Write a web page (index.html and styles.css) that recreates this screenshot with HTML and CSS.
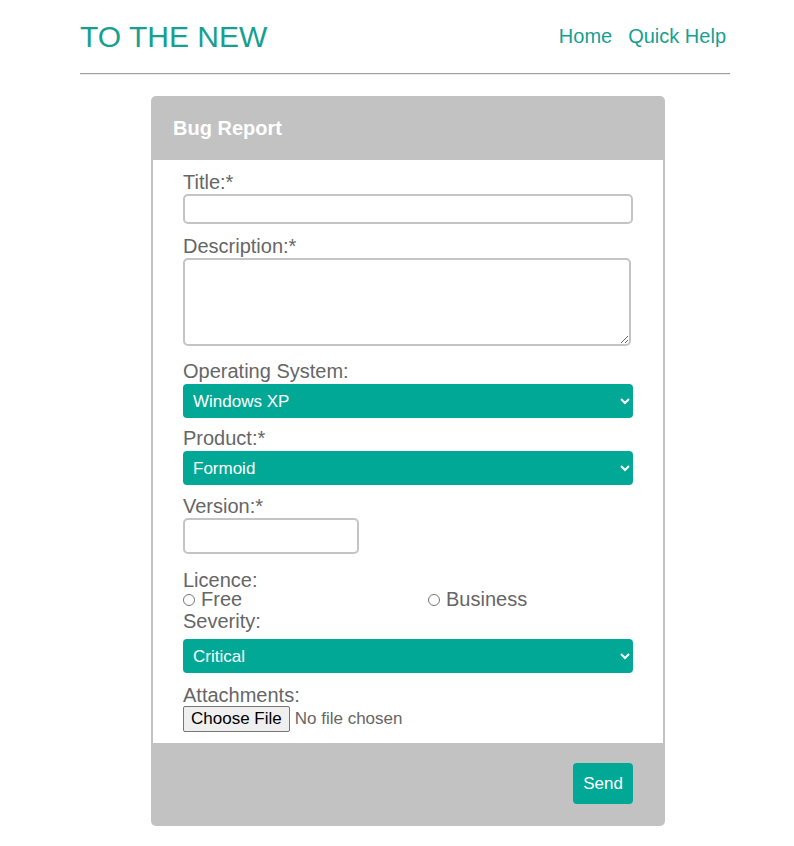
FILE: index.html
```html
<!DOCTYPE html>
<html>
<head>
<meta charset="utf-8">
<link rel="stylesheet" href="styles.css">
</head>
<body>
<div class="page">
  <header class="top">
    <div class="brand">TO THE NEW</div>
    <nav class="nav">
      <a href="#">Home</a>
      <a href="#">Quick Help</a>
    </nav>
  </header>
  <hr class="rule">
  <form class="card">
    <div class="card-head">Bug Report</div>
    <div class="card-body">
      <div class="field f-title">
        <label class="lbl">Title:*</label>
        <input class="txt" type="text">
      </div>
      <div class="field f-desc">
        <label class="lbl">Description:*</label>
        <textarea class="area"></textarea>
      </div>
      <div class="field f-os">
        <label class="lbl">Operating System:</label>
        <select class="sel"><option>Windows XP</option></select>
      </div>
      <div class="field f-prod">
        <label class="lbl">Product:*</label>
        <select class="sel"><option>Formoid</option></select>
      </div>
      <div class="field f-ver">
        <label class="lbl">Version:*</label>
        <input class="txt short" type="text">
      </div>
      <div class="field f-lic">
        <label class="lbl tight">Licence:</label>
        <div class="radios">
          <label class="opt"><input type="radio" name="lic" class="rad">Free</label>
          <label class="opt"><input type="radio" name="lic" class="rad">Business</label>
        </div>
      </div>
      <div class="field f-sev">
        <label class="lbl">Severity:</label>
        <select class="sel sev"><option>Critical</option></select>
      </div>
      <div class="field f-att">
        <label class="lbl">Attachments:</label>
        <input class="file" type="file">
      </div>
    </div>
    <div class="card-foot">
      <button type="button" class="send">Send</button>
    </div>
  </form>
</div>
</body>
</html>
```
FILE: styles.css
```css
html, body {
  margin: 0;
  padding: 0;
  background: #fff;
}
body {
  font-family: "Liberation Sans", Arial, sans-serif;
}
.page {
  width: 650px;
  margin-left: 80px;
  padding-top: 19px;
}
.top {
  display: flex;
  justify-content: space-between;
  align-items: flex-start;
  height: 54px;
}
.brand {
  font-size: 30px;
  line-height: 35px;
  color: #17a090;
}
.nav {
  display: flex;
  gap: 16px;
  padding-top: 6px;
  padding-right: 4px;
}
.nav a {
  font-size: 20px;
  line-height: 23px;
  color: #17a090;
  text-decoration: none;
}
.rule {
  margin: 0;
  border: 0;
  border-top: 1px solid #a0a0a0;
  border-bottom: 1px solid #ececec;
  height: 0;
}
.card {
  width: 514px;
  margin: 21px 0 0 71px;
  border-radius: 5px;
  overflow: hidden;
  background: #c2c2c2;
}
.card-head {
  height: 64px;
  display: flex;
  align-items: center;
  padding-left: 22px;
  color: #fff;
  font-weight: bold;
  font-size: 20px;
  line-height: 23px;
}
.card-body {
  margin: 0 2px;
  background: #fff;
  padding: 11px 30px 11px 30px;
}
.field {
  display: flex;
  flex-direction: column;
  align-items: flex-start;
}
.lbl {
  display: block;
  font-size: 20px;
  line-height: 23px;
  color: #666;
}
.lbl.tight {
  line-height: 19px;
}
.txt {
  box-sizing: border-box;
  width: 450px;
  height: 30px;
  margin: 0;
  border: 2px solid #c4c4c4;
  border-radius: 5px;
  font-size: 16px;
  padding: 0 8px;
}
.txt.short {
  width: 176px;
  height: 36px;
}
.area {
  box-sizing: border-box;
  width: 448px;
  height: 88px;
  margin: 0;
  border: 2px solid #c4c4c4;
  border-radius: 5px;
  font-size: 16px;
  padding: 6px 8px;
  resize: both;
}
.f-title { margin-bottom: 11px; }
.f-desc { margin-bottom: 14px; }
.f-os { margin-bottom: 9px; }
.f-prod { margin-bottom: 10px; }
.f-ver { margin-bottom: 17px; }
.f-lic { margin-bottom: 1px; }
.f-sev { margin-bottom: 11px; }
.sel {
  box-sizing: border-box;
  width: 450px;
  height: 34px;
  margin: 1px 0 0 0;
  border: 0;
  border-radius: 4px;
  background-color: #02a896;
  color: #fff;
  font-family: "Liberation Sans", Arial, sans-serif;
  font-size: 17px;
  padding: 0 6px;
}
.sel.sev {
  margin-top: 6px;
}
.radios {
  display: grid;
  grid-template-columns: 245px auto;
  height: 19px;
}
.opt {
  display: flex;
  align-items: center;
  font-size: 20px;
  line-height: 19px;
  color: #666;
}
.rad {
  width: 12px;
  height: 12px;
  margin: 1px 6px 0 0;
}
.file {
  display: block;
  height: 26px;
  margin-top: -1px;
  font-family: "Liberation Sans", Arial, sans-serif;
  font-size: 17px;
  color: #666;
}
.file::file-selector-button {
  font-family: "Liberation Sans", Arial, sans-serif;
  font-size: 17px;
  color: #000;
  height: 26px;
  padding: 0 7px;
  margin-right: 5px;
  border: 1px solid #767676;
  border-radius: 2px;
  background: #efefef;
}
.card-foot {
  height: 83px;
  display: flex;
  justify-content: flex-end;
  align-items: flex-start;
  padding: 20px 32px 0 0;
  box-sizing: border-box;
}
.send {
  width: 60px;
  height: 41px;
  border: 0;
  border-radius: 4px;
  background: #02a896;
  color: #fff;
  font-family: "Liberation Sans", Arial, sans-serif;
  font-size: 17px;
  padding: 0;
}
```
